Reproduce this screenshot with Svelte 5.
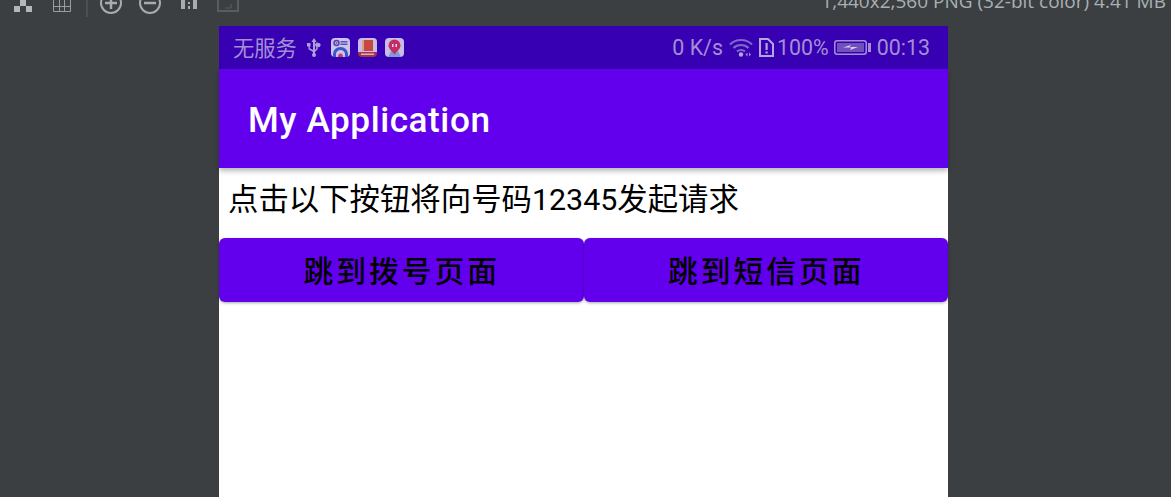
<script>
  const labels = ['跳到拨号页面', '跳到短信页面'];
</script>

<div class="viewer">
  <div class="toolbar">
    <div class="tools">
      <svg width="18" height="12" viewBox="0 0 18 12"><path d="M6 0h6v6H6zM0 6h6v6H0zM12 6h6v6h-6z" fill="#b4b6b7"/></svg>
      <svg class="t2" width="18" height="13" viewBox="0 0 18 13" fill="none" stroke="#9a9c9d"><path d="M.5 0v11.500h17V0M.5 6.500h17M6.500 0v11.500M11.500 0v11.500"/></svg>
      <span class="sep"></span>
      <svg class="t3" width="24" height="15" viewBox="0 0 24 15" fill="none" stroke="#a9abac" stroke-width="2"><circle cx="11" cy="3" r="10"/><path d="M5 3h12M11-3v12" stroke-width="2.500"/></svg>
      <svg class="t4" width="24" height="15" viewBox="0 0 24 15" fill="none" stroke="#a9abac" stroke-width="2"><circle cx="11" cy="3" r="10"/><path d="M5 3h12" stroke-width="2.500"/></svg>
      <svg class="t5" width="18" height="10" viewBox="0 0 18 10" fill="#a9abac"><path d="M1 0h4v9H1zM8 2h2v2H8zM8 6h2v3H8zM13 0h4v9h-4z"/></svg>
      <svg width="22" height="13" viewBox="0 0 22 13" fill="none" stroke="#5a5d5f" stroke-width="2"><path d="M1 0v11h20V0"/><path d="M8 8h6V4" stroke-width="1"/></svg>
    </div>
    <span class="info">1,440x2,560 PNG (32-bit color) 4.41 MB</span>
  </div>

  <div class="phone">
    <div class="status">
      <div class="side">
        <span class="carrier">无服务</span>
        <svg class="usb" width="14" height="20" viewBox="0 0 14 20" fill="#b09ddd"><path d="M7 0l2.500 4H8v10.500c0 1 1 1.500 1 2.500a2 2 0 1 1-4 0c0-1 1-1.500 1-2.500V4H4.500zM0 5h3.500v3.500H2.800v1.700L6 12v2L1.500 11.200V8.500H0zM11.500 5a2 2 0 1 1-.8 3.800v2.400L8 14v-2l1.200-1.500V8.800A2 2 0 0 1 11.500 5z"/></svg>
        <svg class="app" width="19" height="19" viewBox="0 0 19 19"><rect width="19" height="19" rx="4" fill="#cdc2ea"/><circle cx="5.500" cy="5" r="2.500" fill="none" stroke="#4a3fc0" stroke-width="1.500"/><circle cx="5.500" cy="5" r="1" fill="#c2406e"/><path d="M9.500 3h7v1.500h-7zM9.500 5.500h7V7h-7z" fill="#5a4fc8"/><path d="M2 19v-3a7.500 7 0 0 1 15 0v3h-3v-3a4.500 4 0 0 0-9 0v3z" fill="#3a55c4"/><path d="M7 19a2.500 3.500 0 0 1 5 0z" fill="#c23a6e"/></svg>
        <svg class="app" width="19" height="19" viewBox="0 0 19 19"><rect width="19" height="19" rx="4" fill="#a8324f"/><path d="M0 4a4 4 0 0 1 4-4h11a4 4 0 0 1 4 4v10H0z" fill="#c8bde8"/><path d="M4 2h11v11H4z" fill="#c8483f"/><path d="M4 2h2v11H4z" fill="#d9a090"/><path d="M3 15.500h13v1.500H3z" fill="#d8b6b0"/></svg>
        <svg class="app" width="19" height="19" viewBox="0 0 19 19"><rect width="19" height="19" rx="4" fill="#c8bde8"/><path d="M3 19l3-6h7l3 6z" fill="#7f9ad8"/><path d="M9.500 1.500a6 6 0 0 1 6 6c0 3.500-4 6-6 9-2-3-6-5.500-6-9a6 6 0 0 1 6-6z" fill="#c52c62"/><path d="M7 6h1.500v3H7zM10.500 6H12v3h-1.500z" fill="#e8d5e6"/></svg>
      </div>
      <div class="side">
        <span>0 K/s</span>
        <svg class="wifi" width="24" height="19" viewBox="0 0 24 19" fill="none" stroke="#7f68c8" stroke-width="2.200"><path d="M1 6.500c6-6 16-6 22 0M4.500 10c4-4 11-4 15 0M8 13.500c2-2 6-2 8 0"/><circle cx="12" cy="16.500" r="2.200" fill="#b4a6e0" stroke="none"/><path d="M18.500 14.500v4l-2-2zM20 14.500v4l2-2z" fill="#a48fd6" stroke="none"/></svg>
        <svg class="sim" width="15" height="19" viewBox="0 0 15 19" fill="none"><path d="M1 1h8L14 6v12H1z" stroke="#b4a6e0" stroke-width="2"/><path d="M6.500 5h2.200v7H6.500zM6.500 13.500h2.200v2H6.500z" fill="#b4a6e0"/></svg>
        <span>100%</span>
        <svg class="batt" width="37" height="15" viewBox="0 0 37 15"><rect x=".75" y=".75" width="31.500" height="13.500" rx="2.500" fill="none" stroke="#a48fd6" stroke-width="1.500"/><rect x="3" y="3" width="27" height="9" fill="#6f50bd"/><rect x="34" y="3" width="3" height="9" fill="#a48fd6"/><path d="M9 7.500l8-2.500-1.500 2H24l-8 3 1.500-2.500z" fill="#dcd4f2"/></svg>
        <span>00:13</span>
      </div>
    </div>
    <header class="appbar">My Application</header>
    <p class="hint">点击以下按钮将向号码12345发起请求</p>
    <div class="buttons">
      {#each labels as label}
        <button type="button">{label}</button>
      {/each}
    </div>
  </div>
</div>

<style>
  :global(html), :global(body) { margin: 0; background: #3c3f41; }
  .viewer {
    width: 1171px;
    height: 497px;
    overflow: hidden;
    display: flex;
    flex-direction: column;
    font-family: "Roboto", "Noto Sans CJK SC", sans-serif;
  }
  .toolbar {
    height: 26px;
    flex: none;
    display: flex;
    justify-content: space-between;
    padding: 0 5px 0 14px;
    box-sizing: border-box;
  }
  .tools { display: flex; align-items: flex-start; }
  .t2 { margin-left: 21px; }
  .sep { width: 2px; height: 17px; background: #4d5052; margin: 0 12px 0 15px; }
  .t3 { margin-right: 15px; }
  .t4 { margin-right: 17px; }
  .t5 { margin-right: 19px; }
  .info {
    font: 19px/20px "Open Sans", sans-serif;
    color: #a9b0b4;
    margin-top: -9px;
    white-space: nowrap;
  }
  .phone {
    width: 729px;
    margin-left: 219px;
    flex: 1;
    background: #fff;
    display: flex;
    flex-direction: column;
  }
  .status {
    height: 43px;
    flex: none;
    background: #3700b3;
    color: #a48fd6;
    display: flex;
    justify-content: space-between;
    align-items: center;
    padding: 0 18px 0 14px;
    font-size: 21.400px;
  }
  .side { display: flex; align-items: center; }
  .carrier { font-family: "Noto Sans CJK SC", sans-serif; font-size: 21.300px; line-height: 28px; margin: -1px 10px 0 0; }
  .usb { margin-right: 10px; }
  .app { margin-right: 8px; }
  .wifi { margin: 0 6px 0 6px; }
  .sim { margin-right: 3px; }
  .batt { margin: 0 6px 0 5px; }
  .appbar {
    height: 99px;
    flex: none;
    box-sizing: border-box;
    background: #6200ee;
    color: #fff;
    font-size: 35.200px;
    font-weight: 500;
    letter-spacing: 0.550px;
    display: flex;
    align-items: center;
    padding: 2px 0 0 29px;
    box-shadow: 0 3px 5px rgba(0,0,0,.28);
    position: relative;
  }
  .hint {
    margin: 0;
    height: 70px;
    flex: none;
    padding: 15px 0 0 9px;
    box-sizing: border-box;
    font-size: 30.400px;
    line-height: 34px;
    color: #000;
  }
  .buttons { display: grid; grid-template-columns: 1fr 1fr; }
  button {
    height: 64px;
    border: 0;
    border-radius: 6px;
    background: #6200ee;
    color: #000;
    font-family: "Noto Sans CJK SC", sans-serif;
    font-size: 29.750px;
    font-weight: 500;
    letter-spacing: 3px;
    padding: 0 0 2px 1px;
    box-shadow: 0 1px 3px rgba(0,0,0,.35);
  }
</style>
